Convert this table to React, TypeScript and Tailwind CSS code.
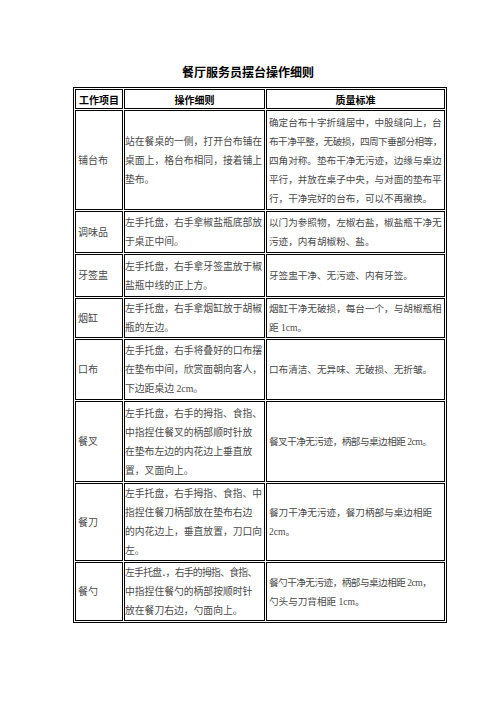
type Row = {
  item: string
  h: string
  steps: string[]
  standard: string[]
}

const rows: Row[] = [
  {
    item: "铺台布",
    h: "h-[100px]",
    steps: [
      "站在餐桌的一侧，打开台布铺在",
      "桌面上，格台布相同，接着铺上",
      "垫布。",
    ],
    standard: [
      "确定台布十字折缝居中，中股缝向上，台",
      "布干净平整，无破损，四周下垂部分相等，",
      "四角对称。垫布干净无污迹，边缘与桌边",
      "平行，并放在桌子中央，与对面的垫布平",
      "行，干净完好的台布，可以不再撤换。",
    ],
  },
  {
    item: "调味品",
    h: "h-[42px]",
    steps: ["左手托盘，右手拿椒盐瓶底部放", "于桌正中间。"],
    standard: ["以门为参照物，左椒右盐，椒盐瓶干净无", "污迹，内有胡椒粉、盐。"],
  },
  {
    item: "牙签盅",
    h: "h-[43px]",
    steps: ["左手托盘，右手拿牙签盅放于椒", "盐瓶中线的正上方。"],
    standard: ["牙签盅干净、无污迹、内有牙签。"],
  },
  {
    item: "烟缸",
    h: "h-[40px]",
    steps: ["左手托盘，右手拿烟缸放于胡椒", "瓶的左边。"],
    standard: ["烟缸干净无破损，每台一个，与胡椒瓶相", "距 1cm。"],
  },
  {
    item: "口布",
    h: "h-[61px]",
    steps: [
      "左手托盘，右手将叠好的口布摆",
      "在垫布中间，欣赏面朝向客人，",
      "下边距桌边 2cm。",
    ],
    standard: ["口布清洁、无异味、无破损、无折皱。"],
  },
  {
    item: "餐叉",
    h: "h-[81px]",
    steps: [
      "左手托盘，右手的拇指、食指、",
      "中指捏住餐叉的柄部顺时针放",
      "在垫布左边的内花边上垂直放",
      "置，叉面向上。",
    ],
    standard: ["餐叉干净无污迹，柄部与桌边相距 2cm。"],
  },
  {
    item: "餐刀",
    h: "h-[78px]",
    steps: [
      "左手托盘，右手拇指、食指、中",
      "指捏住餐刀柄部放在垫布右边",
      "的内花边上，垂直放置，刀口向",
      "左。",
    ],
    standard: ["餐刀干净无污迹，餐刀柄部与桌边相距", "2cm。"],
  },
  {
    item: "餐勺",
    h: "h-[59px]",
    steps: [
      "左手托盘．，右手的拇指、食指、",
      "中指捏住餐勺的柄部按顺时针",
      "放在餐刀右边，勺面向上。",
    ],
    standard: ["餐勺干净无污迹，柄部与桌边相距 2cm，", "勺头与刀背相距 1cm。"],
  },
]

const font = {
  fontFamily: '"Liberation Serif", "Noto Sans CJK SC", serif',
}

const bold = {
  fontFamily: '"Noto Sans CJK SC", sans-serif',
}

export default function App() {
  return (
    <div className="min-h-[702px] w-[496px] bg-white pt-[64px]" style={font}>

      <h1
        className="
          mx-auto
          mb-[7px]
          w-fit
          text-[12px]
          font-bold
          leading-[16px]
          text-black
        "
        style={bold}
      >
        餐厅服务员摆台操作细则
      </h1>

      <table
        className="
          ml-[73px]
          w-[374px]
          table-fixed
          border-separate
          border-spacing-[1px]
          border-[1.5px]
          border-black
          text-[#4a4a4a]
        "
      >
        <colgroup>
          <col className="w-[48px]" />
          <col className="w-[141px]" />
          <col />
        </colgroup>

        <thead>
          <tr className="h-[20px]">
            <th
              className="border border-black px-[3px] text-left text-[10px] font-bold text-black"
              style={bold}
            >
              工作项目
            </th>
            <th
              className="border border-black text-center text-[10px] font-bold text-black"
              style={bold}
            >
              操作细则
            </th>
            <th
              className="border border-black text-center text-[10px] font-bold text-black"
              style={bold}
            >
              质量标准
            </th>
          </tr>
        </thead>

        <tbody>
          {rows.map((r) => (
            <tr key={r.item} className={r.h}>
              <td className="border border-black px-[2px] py-0 align-middle text-[10px] leading-[19px]">
                {r.item}
              </td>
              <td className="whitespace-nowrap border border-black p-0 align-middle text-[9.8px] leading-[19px]">
                {r.steps.map((s, i) => (
                  <div
                    key={i}
                    className={s.includes("．") ? "tracking-[-0.7px]" : ""}
                  >
                    {s}
                  </div>
                ))}
              </td>
              <td className="whitespace-nowrap border border-black px-[2px] py-0 align-middle text-[9.6px] leading-[19px]">
                {r.standard.map((s, i) => (
                  <div
                    key={i}
                    className={s.length > 18 ? "tracking-[-0.5px]" : ""}
                  >
                    {s}
                  </div>
                ))}
              </td>
            </tr>
          ))}
        </tbody>
      </table>

    </div>
  )
}
